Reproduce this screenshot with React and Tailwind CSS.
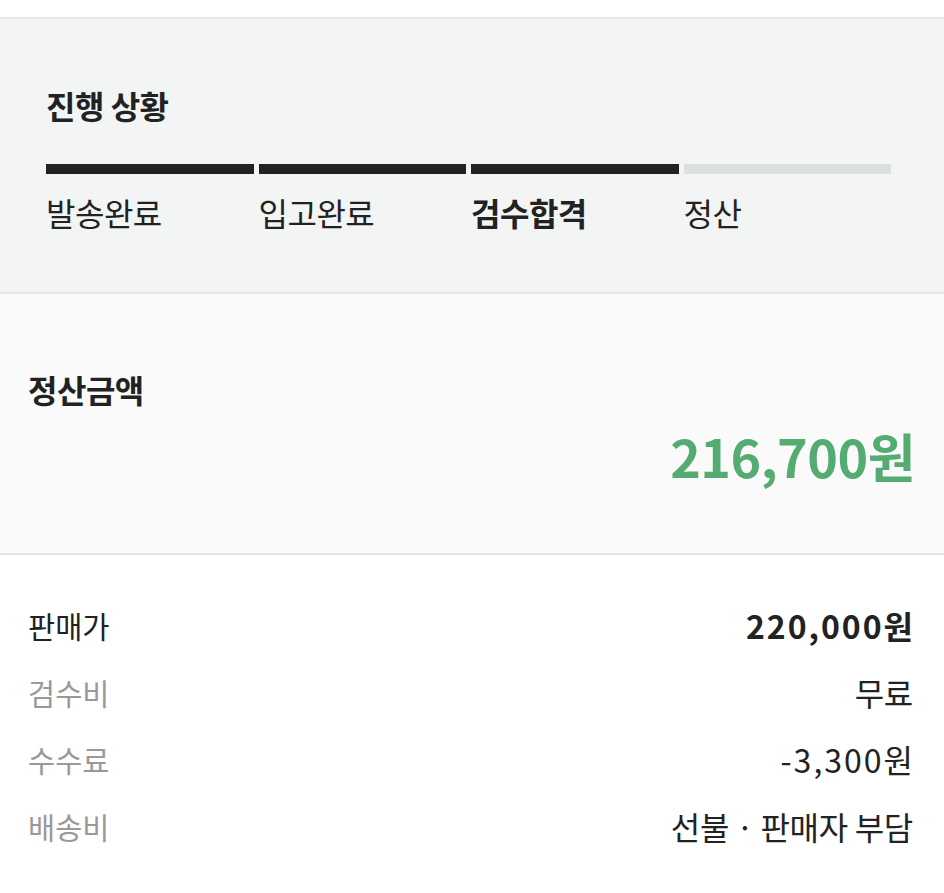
const steps = [
    { label: "발송완료", done: true },
    { label: "입고완료", done: true },
    { label: "검수합격", done: true, current: true },
    { label: "정산", done: false },
];

const rows = [
    { label: "판매가", value: "220,000원", strong: true, num: true },
    { label: "검수비", value: "무료" },
    { label: "수수료", value: "-3,300원", num: true },
    { label: "배송비", value: "선불 · 판매자 부담" },
];

const font = { fontFamily: '"Noto Sans CJK KR", "Noto Sans", sans-serif' };

export default function App() {
    return (
        <div className="min-h-screen bg-white text-[#222]" style={font}>
            <div className="h-[17px]" />

            <section className="border-y-2 border-[#e6e8e8] bg-[#f2f5f4] pt-[66px] pb-[60px] pl-[46px] pr-[53px]">
                <h2 className="text-[32px] font-bold leading-[40px] tracking-[-0.5px]">진행 상황</h2>

                <div className="mt-[39px] grid grid-cols-4 gap-[5px]">
                    {steps.map((s) => (
                        <div key={s.label}>
                            <div className={s.done ? "h-[10px] bg-[#222]" : "h-[10px] bg-[#dcdfdf]"} />
                            <div
                                className={
                                    "mt-[18px] text-[32px] leading-[40px] tracking-[-0.5px] " +
                                    (s.current ? "font-bold" : "font-normal")
                                }
                            >
                                {s.label}
                            </div>
                        </div>
                    ))}
                </div>
            </section>

            <section className="border-b-2 border-[#e6e6e6] bg-[#fafafa] pt-[75px] pb-[67px] px-[28px]">
                <h3 className="text-[32px] font-bold leading-[40px] tracking-[-0.5px]">정산금액</h3>
                <div className="mt-[17px] text-right text-[52px] font-bold leading-[60px] tracking-[-0.5px] text-[#55ac72] pr-[1px]">
                    216,700원
                </div>
            </section>

            <section className="pt-[36px] px-[28px] pr-[31px]">
                {rows.map((r, i) => (
                    <div key={r.label} className="flex h-[67px] items-center justify-between">
                        <span
                            className={
                                "text-[29.5px] leading-[40px] " +
                                (i === 0 ? "text-[#222]" : "text-[#999]")
                            }
                        >
                            {r.label}
                        </span>
                        <span
                            className={
                                "text-[32px] leading-[40px] " +
                                (r.num ? "tracking-[2px] -mr-[2px] " : "tracking-[-0.3px] ") +
                                (r.strong ? "font-bold" : "font-normal")
                            }
                        >
                            {r.value}
                        </span>
                    </div>
                ))}
            </section>
        </div>
    );
}
